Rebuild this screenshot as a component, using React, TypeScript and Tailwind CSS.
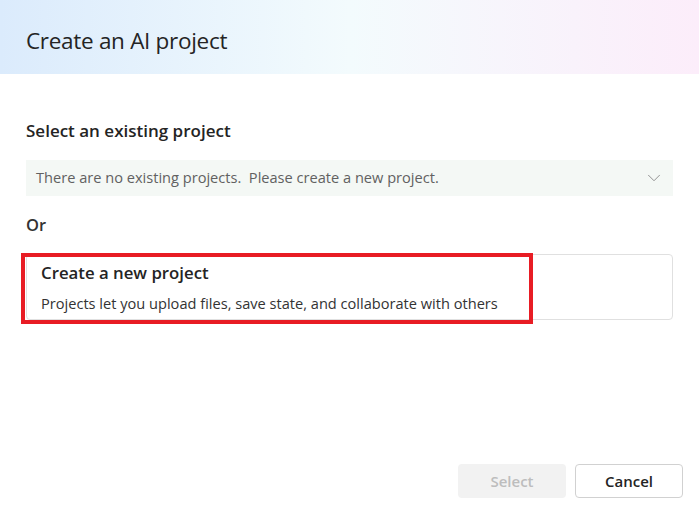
import React from "react";
import { ChevronDown } from "lucide-react";

export default function App() {
  return (
    <div
      className="relative w-[699px] h-[521px] bg-white overflow-hidden text-[#242424]"
      style={{ fontFamily: '"Open Sans", "Noto Sans", sans-serif' }}
    >
      {/* Header */}
      <div className="h-[74px] flex items-center px-[26px] pt-[8px] bg-gradient-to-r from-[#dbebfc] via-[#f3fbfd] to-[#fcedfa]">
        <h1 className="text-[22.5px] leading-none text-[#242424] tracking-[-0.3px]">Create an AI project</h1>
      </div>

      <div className="px-[26px] pt-[45px]">
        <h2 className="text-[17px] font-semibold leading-[24px] mb-[17px]">Select an existing project</h2>

        <div className="h-[36px] bg-[#f4f8f5] flex items-center justify-between pl-[10px] pr-[8px]">
          <span className="text-[14.6px] text-[#616161]">
            There are no existing projects.&nbsp; Please create a new project.
          </span>
          <ChevronDown className="w-[22px] h-[22px] text-[#8a8a8a]" strokeWidth={1} />
        </div>

        <div className="text-[16.5px] font-semibold mt-[17px] leading-[24px] text-[#333]">Or</div>

        <div className="relative mt-[17px] h-[66px] border border-[#e0e0e0] rounded-[4px] px-[14px] flex flex-col justify-center gap-[11px]">
          <div className="text-[16.8px] font-semibold leading-[20px]">Create a new project</div>
          <div className="text-[14.6px] leading-[18px] text-[#333]">
            Projects let you upload files, save state, and collaborate with others
          </div>
          <div className="absolute left-[-6px] top-[-2px] w-[512px] h-[71px] border-[4px] border-[#e81c24] pointer-events-none" />
        </div>
      </div>

      {/* Footer */}
      <div className="absolute right-[16px] bottom-[23px] flex gap-[9px]">
        <button className="w-[108px] h-[34px] rounded-[4px] bg-[#f2f2f2] text-[#bdbdbd] text-[15px] font-semibold">
          Select
        </button>
        <button className="w-[108px] h-[34px] rounded-[4px] border border-[#d1d1d1] bg-white text-[#242424] text-[15px] font-semibold">
          Cancel
        </button>
      </div>
    </div>
  );
}
